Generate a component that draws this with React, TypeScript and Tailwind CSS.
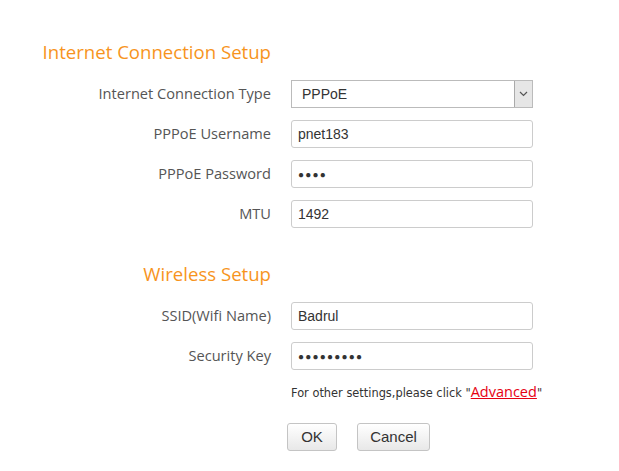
import React from "react";

interface Field {
  label: string;
  value: string;
  password?: boolean;
}

const internetFields: Field[] = [
  { label: "PPPoE Username", value: "pnet183" },
  { label: "PPPoE Password", value: "●●●●", password: true },
  { label: "MTU", value: "1492" },
];

const wirelessFields: Field[] = [
  { label: "SSID(Wifi Name)", value: "Badrul" },
  { label: "Security Key", value: "●●●●●●●●●", password: true },
];

const labelCls =
  "w-[271px] shrink-0 text-right text-[14.6px] text-[#555] font-['Open_Sans',sans-serif]";

const Row = ({ label, children }: { label: string; children: React.ReactNode }) => (
  <div className="flex items-center h-[28px] gap-5">
    <div className={labelCls}>{label}</div>
    {children}
  </div>
);

// password fields are drawn as plain boxes so the dots match the old browser look
const TextInput = ({ value, password }: { value: string; password?: boolean }) => (
  <div className="w-[242px] h-[28px] border border-[#ccc] rounded-[3px] px-[6px] flex items-center bg-white text-[#333] font-['Liberation_Sans',Arial,sans-serif]">
    {password ? (
      <span className="text-[10px] tracking-[1.2px] text-[#333]">{value}</span>
    ) : (
      <span className="text-[14px]">{value}</span>
    )}
  </div>
);

const SectionTitle = ({ children }: { children: React.ReactNode }) => (
  <div className="w-[271px] text-right h-[24px] leading-[24px] text-[18.6px] text-[#f7941d] font-['Open_Sans',sans-serif]">
    {children}
  </div>
);

export default function App() {
  return (
    <div className="w-[619px] h-[471px] bg-white pt-10 overflow-hidden">
      <SectionTitle>Internet Connection Setup</SectionTitle>
      <div className="mt-4 flex flex-col gap-3">
        <Row label="Internet Connection Type">
          <div className="w-[242px] h-[28px] border border-[#bbb] flex items-center bg-white">
            <span className="flex-1 pl-[10px] text-[14px] text-[#333] font-['Liberation_Sans',Arial,sans-serif]">
              PPPoE
            </span>
            <div className="w-[18px] h-[26px] bg-[#e6e6e6] border-l border-[#aaa] flex items-center justify-center">
              <svg width="9" height="6" viewBox="0 0 9 6">
                <path d="M1 1 L4.5 4.5 L8 1" stroke="#555" strokeWidth="1.2" fill="none" />
              </svg>
            </div>
          </div>
        </Row>
        {internetFields.map((f) => (
          <Row key={f.label} label={f.label}>
            <TextInput value={f.value} password={f.password} />
          </Row>
        ))}
      </div>

      <div className="mt-[34px]">
        <SectionTitle>Wireless Setup</SectionTitle>
      </div>
      <div className="mt-4 flex flex-col gap-3">
        {wirelessFields.map((f) => (
          <Row key={f.label} label={f.label}>
            <TextInput value={f.value} password={f.password} />
          </Row>
        ))}
      </div>

      <div className="mt-[14px] ml-[291px] h-[16px] leading-[16px] text-[11.4px] text-[#333] font-['DejaVu_Sans',Verdana,sans-serif] whitespace-nowrap">
        For other settings,please click "
        <a href="#" className="text-[14.5px] text-[#e60012] underline font-['Open_Sans',sans-serif]">
          Advanced
        </a>
        "
      </div>

      <div className="mt-[23px] ml-[287px] flex gap-5">
        <button className="w-[50px] h-[28px] rounded-[3px] border border-[#c4c4c4] bg-gradient-to-b from-white to-[#e8e8e8] text-[15px] text-[#333] font-['Liberation_Sans',Arial,sans-serif]">
          OK
        </button>
        <button className="w-[73px] h-[28px] rounded-[3px] border border-[#c4c4c4] bg-gradient-to-b from-white to-[#e8e8e8] text-[15px] text-[#333] font-['Liberation_Sans',Arial,sans-serif]">
          Cancel
        </button>
      </div>
    </div>
  );
}
